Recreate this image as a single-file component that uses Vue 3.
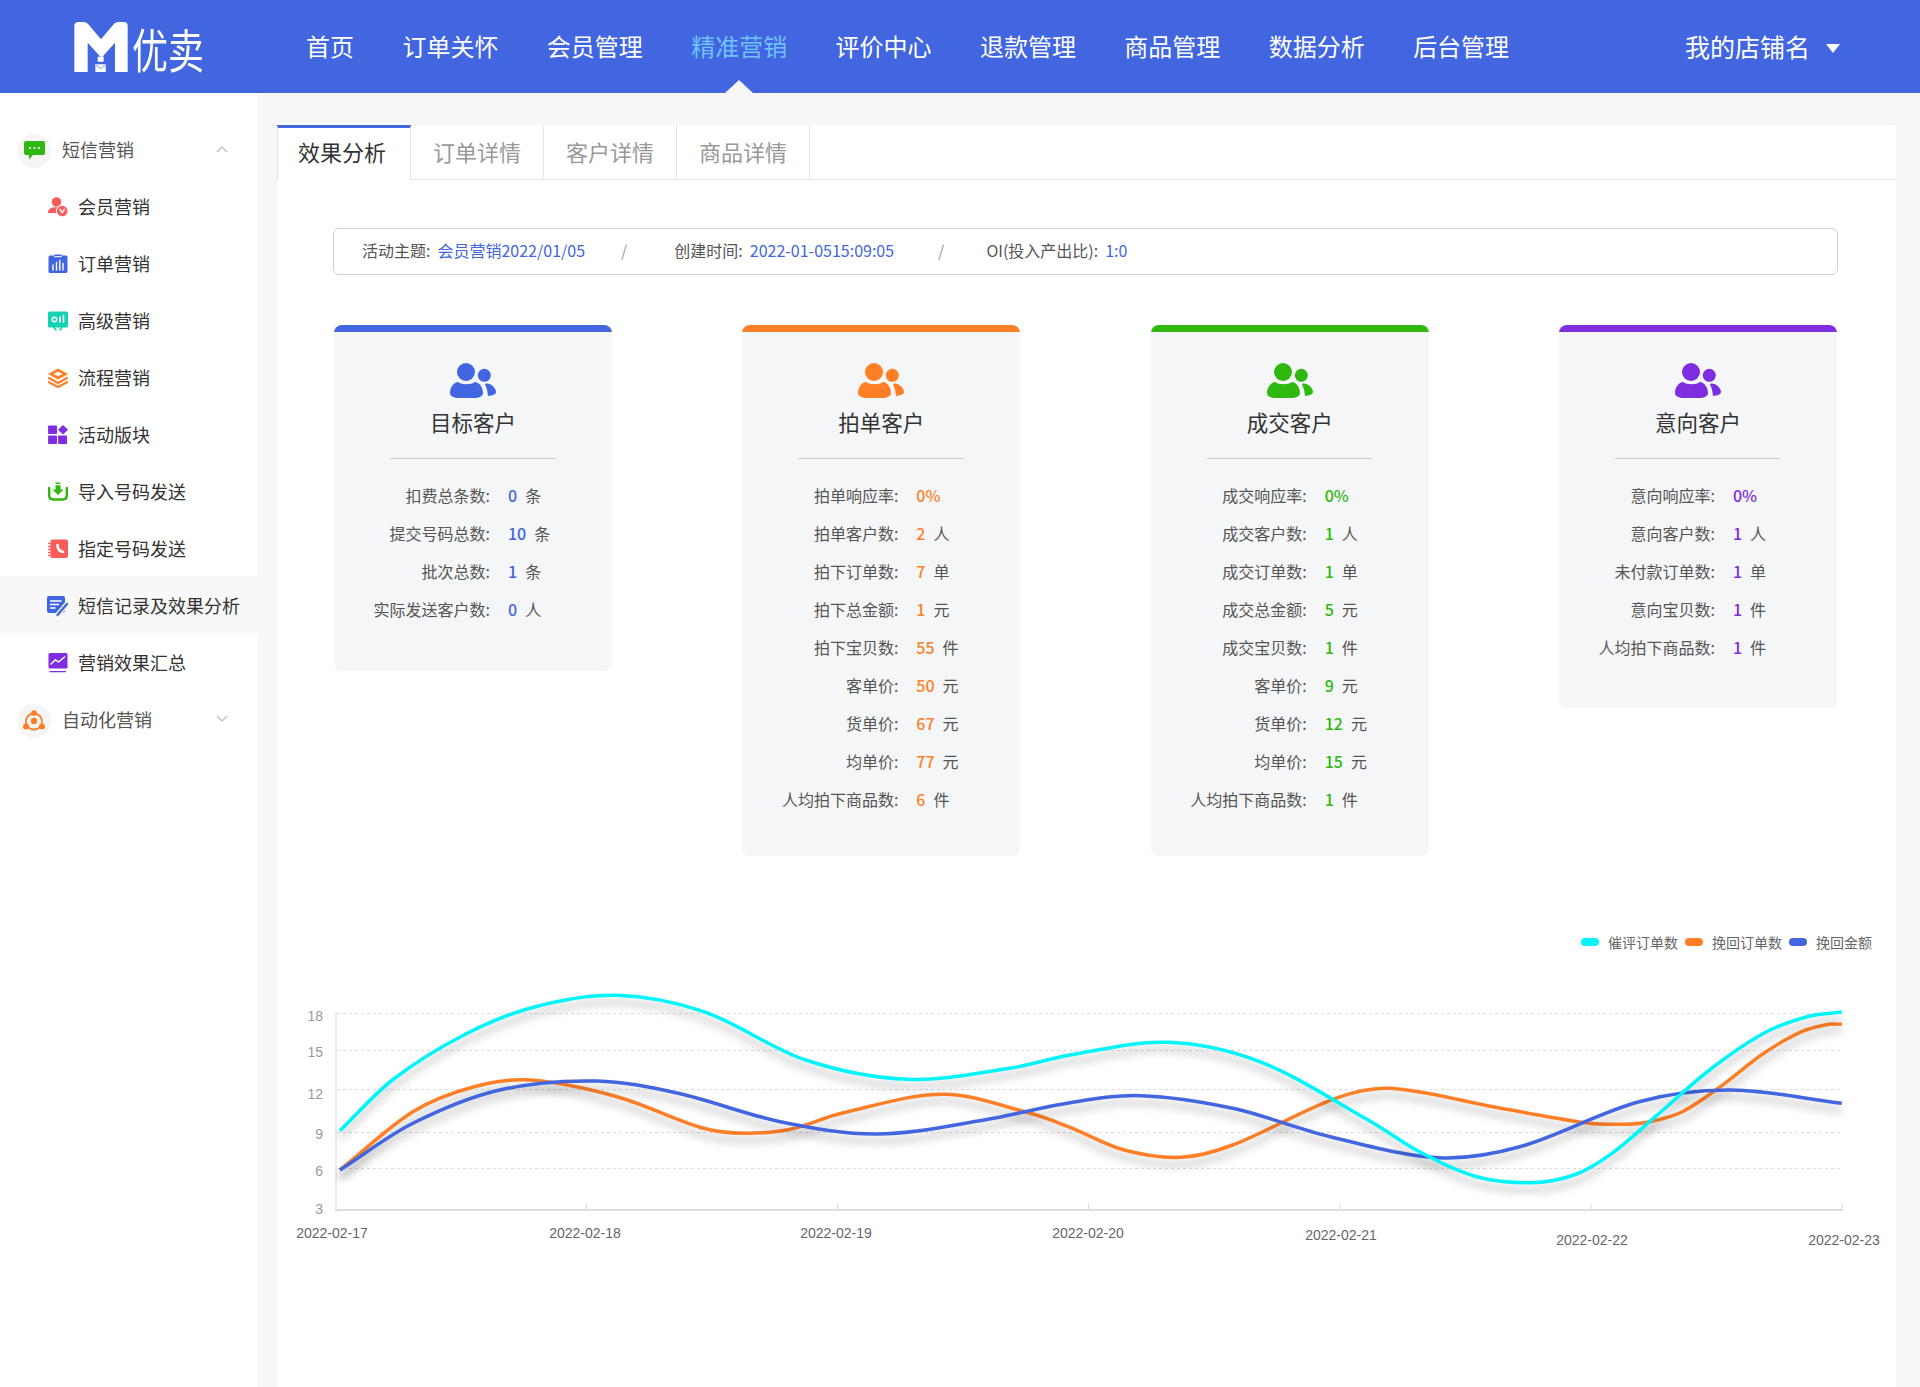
<template>
  <div class="page">
    <header class="top">
      <div class="logo">
        <svg class="logo-m" viewBox="0 0 160 150">
          <path fill="#fff" d="M0 150V12Q0 0 12 0H28Q36 0 42 7L80 52L118 7Q124 0 132 0H148Q160 0 160 12V150H122V62L84 104H78L40 62V150Z" />
          <path fill="#fff" d="M76 86h6v5h-6zM82 98h5v5h-5zM70 104h18v15H70zM63 127h31v23H63z" />
          <path fill="none" stroke="#4166e0" stroke-width="2" d="M65 129l14 10 13-10" />
        </svg>
        <span class="logo-text">优卖</span>
      </div>
      <nav class="nav">
        <a v-for="n in navs" :key="n" class="nav-item" :class="{ on: n === '精准营销' }">{{ n }}</a>
      </nav>
      <div class="shop">我的店铺名<i class="shop-arrow"></i></div>
    </header>

    <div class="body">
      <aside class="side">
        <template v-for="m in menu" :key="m.name">
          <div v-if="m.group" class="side-group">
            <span class="side-circle">
              <svg :width="m.w" :height="m.h" :viewBox="`0 0 ${m.w} ${m.h}`">
                <path v-for="(p, i) in m.icon" :key="i" :d="p.d" :fill="p.fill || 'none'" :stroke="p.stroke" :stroke-width="p.sw" stroke-linecap="round" />
              </svg>
            </span>
            <span class="side-group-name">{{ m.name }}</span>
            <svg class="chev" width="12" height="8" viewBox="0 0 12 8">
              <path :d="m.open ? 'M1 7l5-5 5 5' : 'M1 1l5 5 5-5'" fill="none" stroke="#bbb" stroke-width="1.2" />
            </svg>
          </div>
          <div v-else class="side-item" :class="{ on: m.active }">
            <svg class="side-icon" width="22" height="20" viewBox="0 0 22 20">
              <path v-for="(p, i) in m.icon" :key="i" :d="p.d" :fill="p.fill || 'none'" :stroke="p.stroke" :stroke-width="p.sw" stroke-linecap="round" stroke-linejoin="round" />
            </svg>
            <span>{{ m.name }}</span>
          </div>
        </template>
      </aside>

      <main class="panel">
        <div class="tabs">
          <a v-for="(t, i) in tabs" :key="t" class="tab" :class="{ on: i === 0 }">{{ t }}</a>
        </div>

        <div class="info">
          <span class="info-label">活动主题:</span><span class="info-val">会员营销2022/01/05</span>
          <span class="info-sep sep1">/</span>
          <span class="info-label">创建时间:</span><span class="info-val">2022-01-0515:09:05</span>
          <span class="info-sep sep2">/</span>
          <span class="info-label">OI(投入产出比):</span><span class="info-val">1:0</span>
        </div>

        <div class="cards">
          <section v-for="c in cards" :key="c.title" class="card" :style="{ '--accent': c.color, paddingBottom: c.pad + 'px' }">
            <div class="card-bar"></div>
            <svg class="card-icon" width="46" height="35" viewBox="0 0 46 35" fill="currentColor">
              <circle cx="16" cy="9" r="9" />
              <circle cx="34.3" cy="12.3" r="6.5" />
              <path d="M0 30C0 24 4 19.5 8 19C12 22 21 22 25 19C29 19.5 33 24 33 30C33 33.5 29 35 24 35H9C4 35 0 33.5 0 30Z" />
              <path d="M36 20.5C41 20 46 25 46 29C46 31.5 42 32.5 38 33C37.5 28 36.5 24 35 21.5Z" />
            </svg>
            <h3 class="card-title">{{ c.title }}</h3>
            <div class="card-line"></div>
            <div v-for="r in c.rows" :key="r[0]" class="row">
              <span class="row-label">{{ r[0] }}:</span>
              <b class="row-val">{{ r[1] }}</b>
              <span class="row-unit">{{ r[2] }}</span>
            </div>
          </section>
        </div>

        <div class="legend">
          <span v-for="l in legend" :key="l.name" class="legend-item">
            <i class="legend-dot" :style="{ background: l.color }"></i>{{ l.name }}
          </span>
        </div>

        <svg class="chart" width="1619" height="300" viewBox="277 954 1619 300">
          <line v-for="y in gridY" :key="y" x1="337" x2="1842" :y1="y" :y2="y" class="grid" />
          <line x1="336" x2="336" y1="1013" y2="1210" class="axis" />
          <line x1="335" x2="1843" y1="1210" y2="1210" class="axis-x" />
          <line v-for="t in ticks" :key="t" :x1="t" :x2="t" y1="1204" y2="1210" class="axis" />
          <text v-for="l in yLabels" :key="l[0]" x="323" :y="l[1] + 5" text-anchor="end" class="y-text">{{ l[0] }}</text>
          <text v-for="l in xLabels" :key="l[0]" :x="l[1]" :y="l[2] + 5" text-anchor="middle" class="x-text">{{ l[0] }}</text>
          <path v-for="s in series" :key="s.color" :d="s.d" :stroke="s.color" class="curve" />
        </svg>
      </main>
    </div>
  </div>
</template>

<script setup>
const navs = ['首页', '订单关怀', '会员管理', '精准营销', '评价中心', '退款管理', '商品管理', '数据分析', '后台管理']
const tabs = ['效果分析', '订单详情', '客户详情', '商品详情']

const RED = '#fa5b5b'
const BLUE = '#4166e0'
const TEAL = '#12d3b2'
const ORANGE = '#ff7f27'
const PURPLE = '#7f2de0'
const GREEN = '#2fb80f'

const dot = (x, y, r) => `M${x - r} ${y}a${r} ${r} 0 1 0 ${r * 2} 0a${r} ${r} 0 1 0 ${-r * 2} 0Z`

const menu = [
  {
    name: '短信营销', group: true, open: true, w: 21, h: 19,
    icon: [
      { d: 'M2 0H19Q21 0 21 2V12Q21 14 19 14H9L5 18.5V14H2Q0 14 0 12V2Q0 0 2 0Z', fill: GREEN },
      { d: dot(6, 7, 1.1) + dot(10.5, 7, 1.1) + dot(15, 7, 1.1), fill: '#fff' }
    ]
  },
  {
    name: '会员营销',
    icon: [
      { d: dot(8.5, 5, 4.8), fill: RED },
      { d: 'M0 15.5C0 11.5 3.5 10.2 8.5 10.2C10.5 10.2 12 10.5 13 11L9 16H1Q0 16 0 15.5Z', fill: RED },
      { d: dot(14.2, 14, 6.2), fill: '#fff' },
      { d: dot(14.2, 14, 5.3), fill: RED },
      { d: 'M12 12.2L14.2 16L16.4 12.2', stroke: '#fff', sw: 1.3 }
    ]
  },
  {
    name: '订单营销',
    icon: [
      { d: 'M2 1.5H6.5V0.5H13.5V1.5H18Q19.5 1.5 19.5 3V17.5Q19.5 19 18 19H2Q0.5 19 0.5 17.5V3Q0.5 1.5 2 1.5Z', fill: BLUE },
      { d: 'M6.5 2.7H13.5', stroke: '#fff', sw: 1 },
      { d: 'M5 11V16M8.5 8.5V16M11.8 6.5V16M15 9.5V16', stroke: '#fff', sw: 1.4 }
    ]
  },
  {
    name: '高级营销',
    icon: [
      { d: 'M1.5 0.5H18.5Q20 0.5 20 2V15Q20 16.5 18.5 16.5H1.5Q0 16.5 0 15V2Q0 0.5 1.5 0.5Z', fill: TEAL },
      { d: dot(6.5, 8.5, 2.2), stroke: '#fff', sw: 1.5 },
      { d: 'M12 6V11M15.5 4.5V11', stroke: '#fff', sw: 1.6 },
      { d: 'M6 16.5L8 19M14 16.5L12 19', stroke: TEAL, sw: 1.6 }
    ]
  },
  {
    name: '流程营销',
    icon: [
      { d: 'M10 0.5L20 6L10 11.5L0 6Z', fill: ORANGE },
      { d: 'M10 3.8L14.5 6L10 8.2L5.5 6Z', fill: '#fff' },
      { d: 'M1 10L10 15L19 10', stroke: ORANGE, sw: 2.2 },
      { d: 'M1 14.2L10 19L19 14.2', stroke: ORANGE, sw: 2.2 }
    ]
  },
  {
    name: '活动版块',
    icon: [
      { d: 'M1 1H8.5V8.5H1ZM1 11H8.5V18.5H1ZM11 11H18.5V18.5H11Z', fill: PURPLE, stroke: PURPLE, sw: 1 },
      { d: 'M15 0L20 4.8L15 9.6L10 4.8Z', fill: PURPLE }
    ]
  },
  {
    name: '导入号码发送',
    icon: [
      { d: 'M7.5 0.5H12.5V2H7.5ZM7.5 3.2H12.5V7.5H15.5L10 13L4.5 7.5H7.5Z', fill: GREEN },
      { d: 'M1.2 6V13.5Q1.2 17.5 5.2 17.5H14.8Q18.8 17.5 18.8 13.5V6', stroke: GREEN, sw: 2.4 }
    ]
  },
  {
    name: '指定号码发送',
    icon: [
      { d: 'M4.5 0.5H18Q20 0.5 20 2.5V17Q20 19 18 19H4.5Q2.5 19 2.5 17V2.5Q2.5 0.5 4.5 0.5Z', fill: RED },
      { d: 'M0.6 4.5H4M0.6 7.5H4M0.6 10.5H4M0.6 13.5H4M0.6 16.5H4', stroke: RED, sw: 1.3 },
      { d: 'M9.5 6C9.5 9.5 11.5 12.3 15 13', stroke: '#fff', sw: 2.6 }
    ]
  },
  {
    name: '短信记录及效果分析', active: true,
    icon: [
      { d: 'M1 0H15Q17 0 17 2V14Q17 17 14 17H1Q-1 17 -1 15V2Q-1 0 1 0Z', fill: BLUE },
      { d: 'M2.5 5H13M2.5 8.5H10.5M2.5 12H7', stroke: '#fff', sw: 1.5 },
      { d: 'M9.5 19L19 8', stroke: '#f8f8f8', sw: 5 },
      { d: 'M9.5 19L19 8', stroke: BLUE, sw: 2.4 }
    ]
  },
  {
    name: '营销效果汇总',
    icon: [
      { d: 'M1.5 0H18Q19.5 0 19.5 1.5V14.5Q19.5 15.5 18 15.5H1.5Q0.5 15.5 0.5 14.5V1.5Q0.5 0 1.5 0Z', fill: PURPLE },
      { d: 'M3 11L7.5 6.8L10.5 9L16.5 4', stroke: '#fff', sw: 1.5 },
      { d: 'M2 18.6H17.5', stroke: PURPLE, sw: 1.4 }
    ]
  },
  {
    name: '自动化营销', group: true, open: false, w: 22, h: 21,
    icon: [
      { d: 'M11 3.5A8 8 0 1 1 10.9 3.5', stroke: ORANGE, sw: 1.8 },
      { d: dot(11, 11, 3.2), fill: ORANGE },
      { d: dot(11, 3, 2.8) + dot(3, 16.5, 3) + dot(19, 16.5, 3), fill: ORANGE }
    ]
  }
]

const cards = [
  {
    title: '目标客户', color: BLUE, pad: 43,
    rows: [['扣费总条数', '0', '条'], ['提交号码总数', '10', '条'], ['批次总数', '1', '条'], ['实际发送客户数', '0', '人']]
  },
  {
    title: '拍单客户', color: ORANGE, pad: 38,
    rows: [['拍单响应率', '0%', ''], ['拍单客户数', '2', '人'], ['拍下订单数', '7', '单'], ['拍下总金额', '1', '元'], ['拍下宝贝数', '55', '件'], ['客单价', '50', '元'], ['货单价', '67', '元'], ['均单价', '77', '元'], ['人均拍下商品数', '6', '件']]
  },
  {
    title: '成交客户', color: GREEN, pad: 38,
    rows: [['成交响应率', '0%', ''], ['成交客户数', '1', '人'], ['成交订单数', '1', '单'], ['成交总金额', '5', '元'], ['成交宝贝数', '1', '件'], ['客单价', '9', '元'], ['货单价', '12', '元'], ['均单价', '15', '元'], ['人均拍下商品数', '1', '件']]
  },
  {
    title: '意向客户', color: PURPLE, pad: 42,
    rows: [['意向响应率', '0%', ''], ['意向客户数', '1', '人'], ['未付款订单数', '1', '单'], ['意向宝贝数', '1', '件'], ['人均拍下商品数', '1', '件']]
  }
]

const CYAN = '#00f5fb'
const legend = [
  { name: '催评订单数', color: CYAN },
  { name: '挽回订单数', color: ORANGE },
  { name: '挽回金额', color: BLUE }
]

const gridY = [1013.5, 1050.5, 1089.5, 1132.5, 1168.5]
const ticks = [586.5, 837.5, 1088.5, 1340, 1591, 1842]
const yLabels = [['18', 1016], ['15', 1052], ['12', 1094], ['9', 1134], ['6', 1171], ['3', 1209]]
const xLabels = [
  ['2022-02-17', 332, 1233], ['2022-02-18', 585, 1233], ['2022-02-19', 836, 1233], ['2022-02-20', 1088, 1233],
  ['2022-02-21', 1341, 1235], ['2022-02-22', 1592, 1240], ['2022-02-23', 1844, 1240]
]

// curve points, read from two crops of the reference
const left = (pts) => pts.map(([x, y]) => [270 + x / 1.96, 920 + y / 3])
const right = (pts) => pts.map(([x, y]) => [1070 + x / 1.845, 920 + y / 3])

// hermite through the points, x always grows so spacing can be uneven
const smooth = (p) => {
  const slope = (i) => {
    const a = p[i - 1] || p[i]
    const b = p[i + 1] || p[i]
    return (b[1] - a[1]) / (b[0] - a[0])
  }
  let d = `M${p[0][0].toFixed(1)} ${p[0][1].toFixed(1)}`
  for (let i = 0; i < p.length - 1; i++) {
    const dx = (p[i + 1][0] - p[i][0]) / 3
    const c1y = p[i][1] + slope(i) * dx
    const c2y = p[i + 1][1] - slope(i + 1) * dx
    d += `C${(p[i][0] + dx).toFixed(1)} ${c1y.toFixed(1)} ${(p[i + 1][0] - dx).toFixed(1)} ${c2y.toFixed(1)} ${p[i + 1][0].toFixed(1)} ${p[i + 1][1].toFixed(1)}`
  }
  return d
}

const orange = [
  ...left([[137, 750], [280, 575], [400, 500], [510, 480], [680, 530], [850, 625], [930, 640], [1020, 628], [1120, 580], [1320, 523], [1490, 580]]),
  ...right([[0, 622], [100, 690], [205, 712], [300, 675], [490, 535], [590, 505], [780, 560], [950, 608], [1020, 613], [1070, 605], [1130, 575], [1200, 500], [1280, 400], [1350, 335], [1400, 313], [1424, 313]])
]
const blue = [
  ...left([[137, 750], [280, 610], [450, 510], [640, 483], [800, 520], [1000, 605], [1190, 642], [1400, 600]]),
  ...right([[0, 548], [130, 527], [300, 565], [480, 650], [680, 713], [830, 680], [1050, 545], [1220, 510], [1424, 550]])
]
const cyan = [
  ...left([[137, 632], [240, 480], [380, 345], [520, 260], [680, 226], [850, 275], [1050, 420], [1250, 478], [1450, 445]]),
  ...right([[0, 405], [180, 367], [350, 425], [550, 600], [650, 700], [750, 770], [850, 788], [930, 765], [1000, 700], [1080, 590], [1180, 450], [1280, 340], [1360, 290], [1424, 276]])
]

const series = [
  { color: ORANGE, d: smooth(orange) },
  { color: BLUE, d: smooth(blue) },
  { color: CYAN, d: smooth(cyan) }
]
</script>

<style>
html, body {
  margin: 0;
  background: #f7f7f7;
}
</style>

<style scoped>
.page {
  min-height: 100vh;
  display: flex;
  flex-direction: column;
  font-family: "Noto Sans CJK SC", "Noto Sans", sans-serif;
  color: #333;
  background: #f7f7f7;
}
.top {
  height: 93px;
  flex: none;
  display: flex;
  align-items: center;
  padding: 0 80px 0 74px;
  background: #4166e0;
  color: #fff;
}
.logo {
  width: 130px;
  height: 50px;
  display: flex;
  align-items: center;
  flex: none;
}
.logo-m {
  width: 54px;
  height: 50px;
  flex: none;
}
.logo-text {
  display: inline-block;
  margin-left: 4px;
  font-size: 36px;
  line-height: 50px;
  transform: scaleY(1.3);
}
.nav {
  display: flex;
  gap: 48.4px;
  margin-left: 102px;
  height: 100%;
  align-items: center;
}
.nav-item {
  position: relative;
  height: 93px;
  font-size: 24px;
  line-height: 91px;
}
.nav-item.on {
  color: #6fc3ff;
}
.nav-item.on::after {
  content: "";
  position: absolute;
  left: 50%;
  bottom: 0;
  margin-left: -14px;
  border-left: 14px solid transparent;
  border-right: 14px solid transparent;
  border-bottom: 13px solid #f7f7f7;
}
.shop {
  margin-left: auto;
  margin-top: -2px;
  display: flex;
  align-items: center;
  font-size: 25px;
}
.shop-arrow {
  margin-left: 16px;
  margin-top: 5px;
  border-left: 7px solid transparent;
  border-right: 7px solid transparent;
  border-top: 9px solid #fff;
}
.body {
  flex: 1;
  display: flex;
}
.side {
  width: 258px;
  flex: none;
  padding-top: 27px;
  background: #fff;
  box-sizing: border-box;
}
.side-group {
  height: 57px;
  display: flex;
  align-items: center;
  padding-left: 17px;
  font-size: 18px;
  color: #555;
}
.side-circle {
  width: 34px;
  height: 34px;
  flex: none;
  margin-top: 4px;
  border-radius: 50%;
  background: #f5f5f5;
  display: flex;
  align-items: center;
  justify-content: center;
}
.side-group-name {
  margin-left: 11px;
}
.chev {
  margin-left: auto;
  margin-right: 30px;
}
.side-item {
  height: 57px;
  display: flex;
  align-items: center;
  padding-left: 48px;
  font-size: 18px;
  color: #333;
}
.side-item.on {
  background: #f8f8f8;
}
.side-icon {
  width: 22px;
  flex: none;
  margin: 3px 8px 0 0;
  overflow: visible;
}
.panel {
  flex: 1;
  min-width: 0;
  margin: 32px 24px 0 19px;
  background: #fff;
  border-radius: 3px 3px 0 0;
}
.tabs {
  height: 55px;
  box-sizing: border-box;
  display: flex;
  border-bottom: 1px solid #e5e5e5;
}
.tab {
  width: 133px;
  box-sizing: border-box;
  border-right: 1px solid #e5e5e5;
  font-size: 22px;
  line-height: 52px;
  text-align: center;
  color: #999;
}
.tab.on {
  width: 134px;
  height: 55px;
  padding-right: 4px;
  line-height: 47px;
  color: #333;
  background: #fff;
  border-top: 3px solid #4166e0;
  border-left: 1px solid #e5e5e5;
}
.info {
  height: 47px;
  margin: 48px 58px 50px 56px;
  padding: 0 0 4px 28px;
  display: flex;
  align-items: center;
  box-sizing: border-box;
  border: 1px solid #d2d2d2;
  border-radius: 6px;
  font-size: 16px;
}
.info-label {
  color: #555;
  margin-right: 7px;
}
.info-val {
  color: #4166e0;
}
.info-sep {
  color: #999;
}
.sep1 {
  margin: 0 47px 0 36px;
}
.sep2 {
  margin: 0 42px 0 44px;
}
.cards {
  margin: 0 59px 0 57px;
  display: flex;
  justify-content: space-between;
  align-items: flex-start;
}
.card {
  width: 278px;
  border-radius: 8px;
  overflow: hidden;
  background: #f5f6f8;
  color: var(--accent);
  text-align: center;
}
.card-bar {
  height: 7px;
  background: var(--accent);
}
.card-icon {
  display: block;
  margin: 31px auto 0;
}
.card-title {
  margin: 9px 0 0;
  font-size: 21.5px;
  font-weight: 400;
  line-height: 30px;
  color: #333;
}
.card-line {
  height: 1px;
  margin: 21px 56px 17px;
  background: #ccc;
}
.row {
  height: 38px;
  display: flex;
  align-items: center;
  font-size: 16px;
}
.row-label,
.row-unit {
  color: #555;
}
.row-label {
  width: 156px;
  margin-right: 18px;
  text-align: right;
  flex: none;
}
.row-val {
  margin-right: 8px;
  font-weight: 500;
  color: var(--accent);
}
.legend {
  display: flex;
  justify-content: flex-end;
  gap: 7px;
  margin: 76px 24px 0 0;
  height: 22px;
  font-size: 14px;
  line-height: 20px;
  color: #666;
}
.legend-item {
  display: flex;
  align-items: center;
  height: 20px;
}
.legend-dot {
  width: 18px;
  height: 8px;
  margin-right: 9px;
  border-radius: 4px;
}
.chart {
  display: block;
}
.grid {
  stroke: #dcdcdc;
  stroke-dasharray: 3 3;
}
.axis {
  stroke: #d8d8d8;
}
.axis-x {
  stroke: #ddd;
  stroke-width: 2;
}
.y-text {
  font-family: "Liberation Sans", sans-serif;
  font-size: 14px;
  fill: #999;
}
.x-text {
  font-family: "Liberation Sans", sans-serif;
  font-size: 14px;
  fill: #666;
}
.curve {
  fill: none;
  stroke-width: 3.5;
  filter: drop-shadow(0 7px 4px rgba(0, 0, 0, 0.28));
}
</style>
